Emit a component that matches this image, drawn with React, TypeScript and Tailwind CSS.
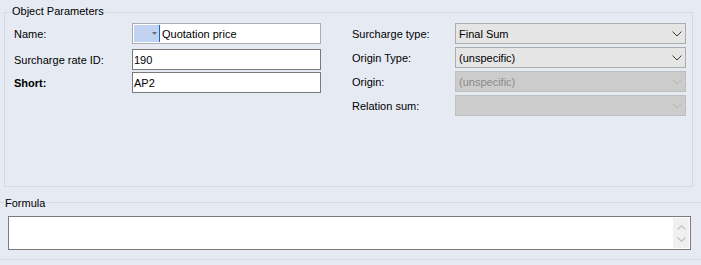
import React from "react";

const BG = "bg-[#e6eaf3]";

function Chevron({ disabled, up }: { disabled?: boolean; up?: boolean }) {
  return (
    <svg width="10" height="6" viewBox="0 0 10 6">
      <path
        d={up ? "M0.5 5.5 L5 1 L9.5 5.5" : "M0.5 0.5 L5 5 L9.5 0.5"}
        fill="none"
        stroke={disabled ? "#b6b6b6" : "#3c3c3c"}
        strokeWidth="1"
      />
    </svg>
  );
}

function SmallArrow({ up }: { up?: boolean }) {
  return (
    <svg width="9" height="5" viewBox="0 0 9 5">
      <path
        d={up ? "M0.5 4.5 L4.5 0.8 L8.5 4.5" : "M0.5 0.5 L4.5 4.2 L8.5 0.5"}
        fill="none"
        stroke="#c4c4c4"
        strokeWidth="1.4"
      />
    </svg>
  );
}

function Combo({ value, disabled, className }: { value?: string; disabled?: boolean; className?: string }) {
  return (
    <div
      className={`flex h-[21px] w-[231px] items-center justify-between pl-[3px] pr-[3px] ${
        disabled ? "border border-[#bfbfbf] bg-[#cccccc] text-[#8a8a8a]" : "border border-[#adadad] bg-[#e5e5e5] text-black"
      } ${className ?? ""}`}
    >
      <span>{value}</span>
      <Chevron disabled={disabled} />
    </div>
  );
}

function TextBox({ value, className }: { value: string; className?: string }) {
  return (
    <div className={`flex h-[21px] w-[189px] items-center border border-[#7a7a7a] bg-white pl-[1px] ${className ?? ""}`}>
      {value}
    </div>
  );
}

export default function App() {
  return (
    <div className={`h-[265px] w-[701px] overflow-hidden ${BG} pt-[12px] font-['Liberation_Sans',Arial,sans-serif] text-[11px] leading-[14px] text-black`}>
      {/* Object Parameters */}
      <div className="relative ml-[4px] h-[175px] w-[689px] border border-[#d5d9e0]">
        <span className={`absolute left-[6px] top-[-9px] ${BG} px-px`}>Object Parameters</span>

        <div className="flex pl-[9px] pt-[10px]">
          <div className="flex flex-col">
            <div className="flex h-[21px] items-center">
              <span className="w-[118px]">Name:</span>
              <div className="flex h-[21px] w-[189px] items-stretch border border-[#abadb3] bg-white p-[1px]">
                <div className="flex w-[25px] items-center justify-end bg-[#c1d3f0] pr-[2px]">
                  <svg width="5" height="3" viewBox="0 0 5 3">
                    <path d="M0 0 H5 L2.5 3 Z" fill="#6e6e6e" />
                  </svg>
                </div>
                <div className="w-px bg-[#1a64c8]" />
                <span className="flex items-center pl-[2px]">Quotation price</span>
              </div>
            </div>
            <div className="mt-[5px] flex h-[21px] items-center">
              <span className="w-[118px]">Surcharge rate ID:</span>
              <TextBox value="190" />
            </div>
            <div className="mt-[2px] flex h-[21px] items-center">
              <span className="w-[118px] font-bold">Short:</span>
              <TextBox value="AP2" />
            </div>
          </div>

          <div className="ml-[31px] flex flex-col gap-[3px]">
            <div className="flex items-center">
              <span className="w-[103px]">Surcharge type:</span>
              <Combo value="Final Sum" />
            </div>
            <div className="flex items-center">
              <span className="w-[103px]">Origin Type:</span>
              <Combo value="(unspecific)" />
            </div>
            <div className="flex items-center">
              <span className="w-[103px]">Origin:</span>
              <Combo value="(unspecific)" disabled />
            </div>
            <div className="flex items-center">
              <span className="w-[103px]">Relation sum:</span>
              <Combo disabled />
            </div>
          </div>
        </div>
      </div>

      {/* Formula */}
      <div className="relative mt-[15px] h-[58px] w-full border-y border-[#d5d9e0] pl-[8px] pt-[13px]">
        <span className={`absolute left-[4px] top-[-7px] ${BG} px-px`}>Formula</span>
        <div className="flex h-[34px] w-[683px] justify-end border border-[#7a7a7a] bg-white p-[1px]">
          <div className="flex w-[16px] flex-col items-center justify-around bg-[#f0f0f0] py-[3px]">
            <SmallArrow up />
            <SmallArrow />
          </div>
        </div>
      </div>
    </div>
  );
}
